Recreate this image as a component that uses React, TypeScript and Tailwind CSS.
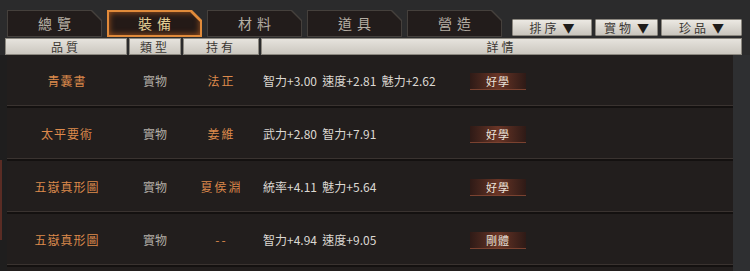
import React from 'react';

const tabs = ['總覽', '裝備', '材料', '道具', '營造'];

const rows = [
  { name: '青囊書', type: '實物', owner: '法正', detail: '智力+3.00  速度+2.81  魅力+2.62', tag: '好學' },
  { name: '太平要術', type: '實物', owner: '姜維', detail: '武力+2.80  智力+7.91', tag: '好學' },
  { name: '五嶽真形圖', type: '實物', owner: '夏侯淵', detail: '統率+4.11  魅力+5.64', tag: '好學' },
  { name: '五嶽真形圖', type: '實物', owner: '--', detail: '智力+4.94  速度+9.05', tag: '剛體' },
];

const cut = '[clip-path:polygon(0_0,calc(100%-10px)_0,100%_10px,100%_100%,0_100%)]';

const Tab = ({ label, active }: { label: string; active: boolean }) => (
  <div
    className={`w-[95px] h-[27px] ${cut} ${
      active ? 'bg-[#e08a3a] p-[2px]' : 'bg-[#45403c] p-px'
    }`}
  >
    <div
      className={`w-full h-full flex items-center justify-center ${cut} ${
        active ? 'bg-[#241a17] text-[#e3cc93] shadow-[inset_0_0_6px_#a8581f]' : 'bg-[#221c1b] text-[#b5aea4]'
      } text-[14px] tracking-[5px] pl-[5px]`}
    >
      {label}
    </div>
  </div>
);

const LightBtn = ({ label, w }: { label: string; w: string }) => (
  <div
    className={`${w} h-[17px] flex items-center justify-center gap-[3px] bg-gradient-to-b from-[#ece9e3] to-[#c9c5bd] border border-[#8b877f] text-[#3b3733] text-[12px] rounded-[1px]`}
  >
    <span className="tracking-[3px]">{label}</span>
    <span className="text-[12px] text-[#1e1c1a] leading-none">▼</span>
  </div>
);

const HeadCell = ({ label, w }: { label: string; w: string }) => (
  <div
    className={`${w} h-[17px] flex items-center justify-center bg-gradient-to-b from-[#e6e3dd] to-[#cbc7bf] border border-[#8b877f] text-[#3b3733] text-[12px] tracking-[3px]`}
  >
    {label}
  </div>
);

export default function App() {
  return (
    <div
      className="w-[750px] h-[271px] overflow-hidden bg-[#2b2b2c] flex flex-col"
      style={{ fontFamily: '"Noto Sans CJK TC", "Liberation Sans", sans-serif' }}
    >
      <div className="h-[38px] flex items-end pl-[7px] pb-px">
        <div className="flex gap-[5px]">
          {tabs.map((t, i) => (
            <Tab key={t} label={t} active={i === 1} />
          ))}
        </div>
        <div className="flex gap-[3px] ml-[10px] mb-px">
          <LightBtn label="排序" w="w-[80px]" />
          <LightBtn label="實物" w="w-[63px]" />
          <LightBtn label="珍品" w="w-[81px]" />
        </div>
      </div>

      <div className="flex gap-[2px] pl-[5px]">
        <HeadCell label="品質" w="w-[122px]" />
        <HeadCell label="類型" w="w-[52px]" />
        <HeadCell label="持有" w="w-[76px]" />
        <HeadCell label="詳情" w="w-[481px]" />
      </div>

      <div className="flex flex-1">
        <div className="w-[7px] bg-[#1f1e1e] flex flex-col">
          <div className="h-[105px]" />
          <div className="h-[80px] w-[2px] bg-[#5a2c24]" />
        </div>
        <div className="w-[726px] bg-[#221e1d] flex flex-col">
          {rows.map((r, i) => (
            <div
              key={i}
              className="h-[53px] flex items-center border-b-2 border-[#141110] shadow-[inset_0_-1px_0_#3a3330] text-[12px] pt-px"
            >
              <div className="w-[120px] text-center text-[#dd8a4c] tracking-[1px]">{r.name}</div>
              <div className="w-[56px] text-center text-[#b3aea7]">{r.type}</div>
              <div className="w-[75px] text-center text-[#dd8a4c] tracking-[2px] pl-[2px]">{r.owner}</div>
              <div className="w-[212px] pl-[5px] text-[#dcd8d2] whitespace-pre">{r.detail}</div>
              <div className="w-[56px] h-[17px] flex items-center justify-center text-[11px] text-[#ece4dc] bg-gradient-to-r from-[#2e1a16] via-[#6a3526] to-[#2e1a16] shadow-[inset_0_-1px_0_#7a4230] tracking-[1px]">
                {r.tag}
              </div>
            </div>
          ))}
        </div>
        <div className="flex-1 bg-[#2e2f31]" />
      </div>
    </div>
  );
}
